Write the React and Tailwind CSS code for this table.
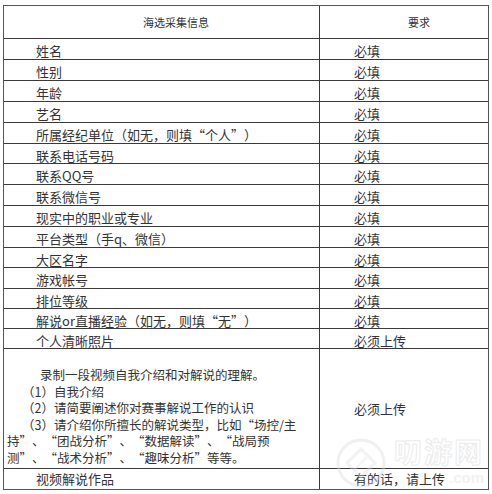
import React from "react";

const rows = [
  { name: "姓名", req: "必填", h: "h-[21px]" },
  { name: "性别", req: "必填", h: "h-[21px]" },
  { name: "年龄", req: "必填", h: "h-[21px]" },
  { name: "艺名", req: "必填", h: "h-[21px]" },
  { name: "所属经纪单位（如无，则填“个人”）", req: "必填", h: "h-[21px]" },
  { name: "联系电话号码", req: "必填", h: "h-[20px]" },
  { name: "联系QQ号", req: "必填", h: "h-[21px]" },
  { name: "联系微信号", req: "必填", h: "h-[21px]" },
  { name: "现实中的职业或专业", req: "必填", h: "h-[21px]" },
  { name: "平台类型（手q、微信）", req: "必填", h: "h-[21px]" },
  { name: "大区名字", req: "必填", h: "h-[20px]" },
  { name: "游戏帐号", req: "必填", h: "h-[21px]" },
  { name: "排位等级", req: "必填", h: "h-[20px]" },
  { name: "解说or直播经验（如无，则填“无”）", req: "必填", h: "h-[20px]" },
  { name: "个人清晰照片", req: "必须上传", h: "h-[20px]" },
];

function Row({ name, req, h }) {
  return (
    <div className={`grid grid-cols-[316px_1fr] border-b border-[#3a3a3a] ${h}`}>
      <div className="flex items-center border-r border-[#3a3a3a] pl-[32px] pt-[2px] whitespace-nowrap">
        {name}
      </div>
      <div className="flex items-center pl-[34px] pt-[1px] whitespace-nowrap">{req}</div>
    </div>
  );
}

function Watermark() {
  return (
    <div className="pointer-events-none absolute left-[334px] top-[436px] flex items-start gap-[6px] opacity-40">
      <svg width="54" height="54" viewBox="0 0 54 54" fill="none">
        <circle cx="27" cy="27" r="23" stroke="#dcdcdc" strokeWidth="3" />
        <path d="M27 13 L41 27 L27 41 L13 27 Z" stroke="#e0e0e0" strokeWidth="3" fill="none" />
        <path d="M20 34 L34 20" stroke="#e6e6e6" strokeWidth="2" />
      </svg>
      <div className="flex flex-col items-end">
        <div className="text-[28px] leading-[30px] font-bold tracking-[2px] text-white [-webkit-text-stroke:1px_#d0d0d0]">
          叨游网
        </div>
        <div className="mt-[4px] text-[15px] leading-[16px] font-bold text-[#dedede] font-['Liberation_Sans',sans-serif]">
          .com
        </div>
      </div>
    </div>
  );
}

export default function App() {
  return (
    <div
      lang="zh-CN"
      className="relative h-[494px] w-[492px] bg-white pl-[3px] pt-[5px] text-[13px] text-[#333] [text-spacing-trim:space-all] font-['Noto_Sans_CJK_SC','Microsoft_YaHei',sans-serif]"
    >
      <div className="w-[486px] border border-[#555]">
        <div className="grid h-[33px] grid-cols-[316px_1fr] border-b border-[#3a3a3a] text-[11px]">
          <div className="flex items-center border-r border-[#3a3a3a] pl-[139px]">海选采集信息</div>
          <div className="flex items-center pl-[88px]">要求</div>
        </div>

        {rows.map((r) => (
          <Row key={r.name} {...r} />
        ))}

        <div className="grid h-[120px] grid-cols-[316px_1fr] border-b border-[#3a3a3a]">
          <div className="border-r border-[#3a3a3a] pl-[3px] pt-[18px] text-[12.5px] leading-[16.5px] whitespace-nowrap">
            <div className="pl-[33px]">录制一段视频自我介绍和对解说的理解。</div>
            <div className="pl-[15px]">（1）自我介绍</div>
            <div className="pl-[15px]">（2）请简要阐述你对赛事解说工作的认识</div>
            <div className="pl-[15px]">（3）请介绍你所擅长的解说类型，比如“场控/主</div>
            <div>持”、“团战分析”、“数据解读”、“战局预</div>
            <div>测”、“战术分析”、“趣味分析”等等。</div>
          </div>
          <div className="flex items-center pl-[34px]">必须上传</div>
        </div>

        <div className="grid h-[20px] grid-cols-[316px_1fr]">
          <div className="flex items-center border-r border-[#3a3a3a] pl-[32px]">视频解说作品</div>
          <div className="flex items-center pl-[34px]">有的话，请上传</div>
        </div>
      </div>
      <Watermark />
    </div>
  );
}
